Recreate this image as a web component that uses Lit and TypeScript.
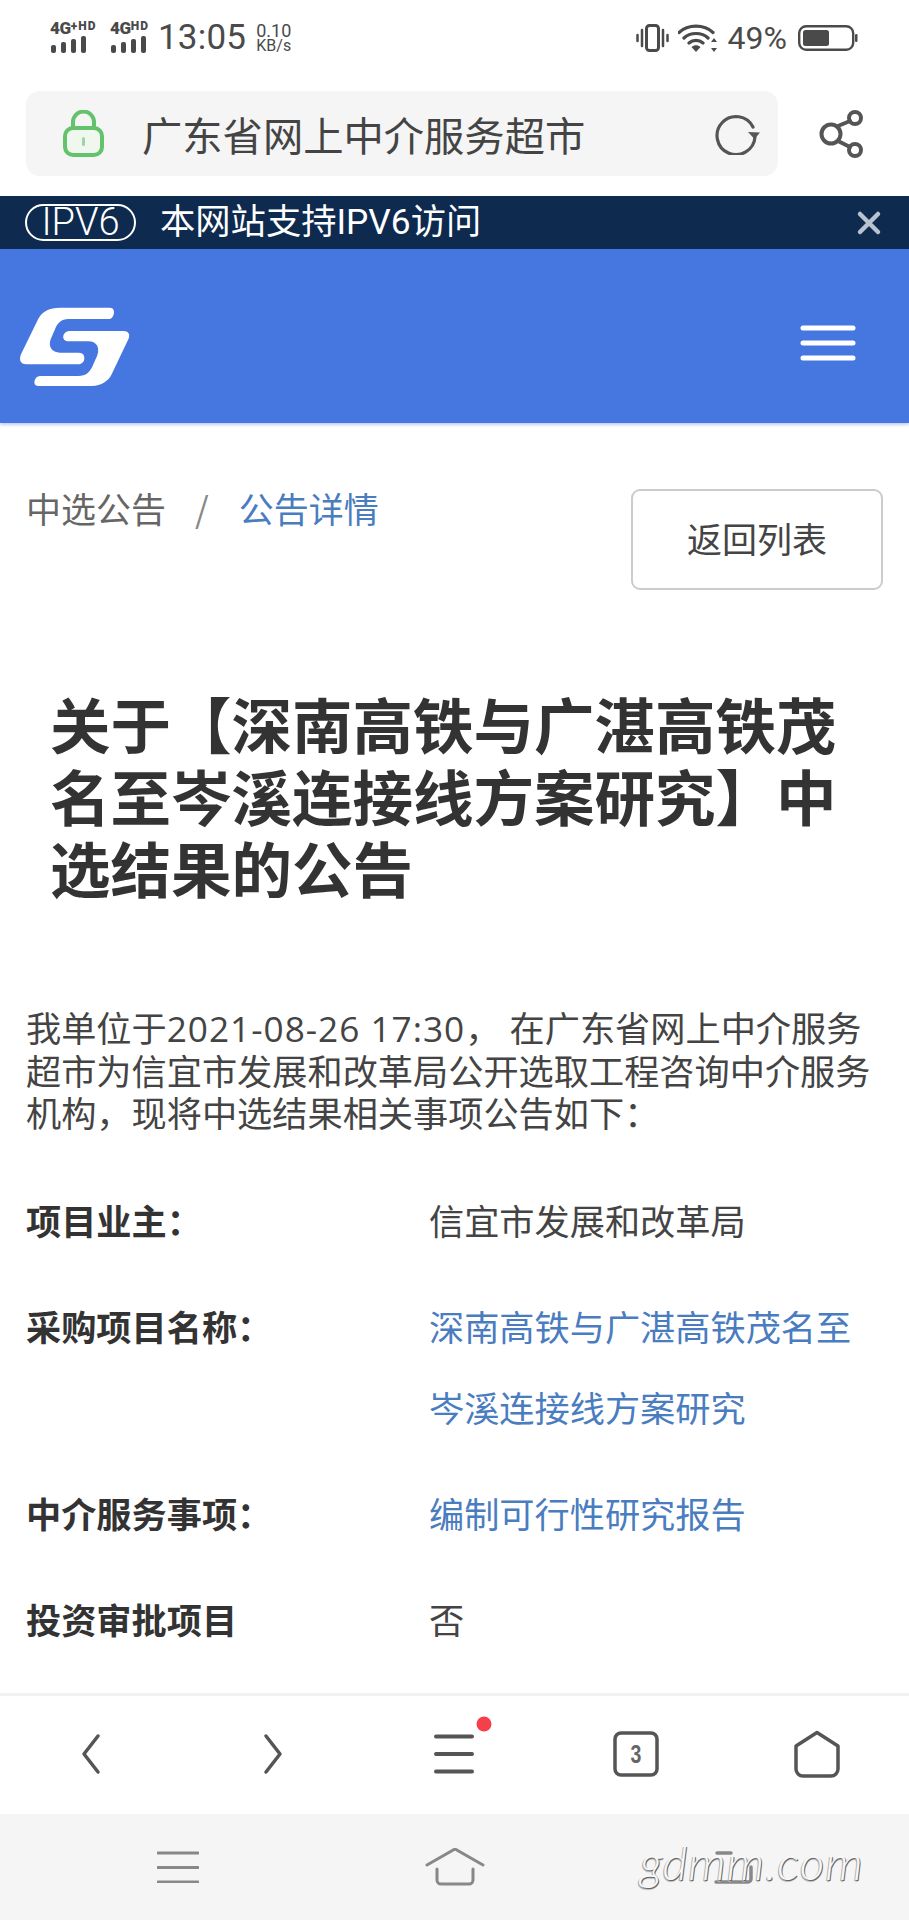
import { LitElement, html, css } from "lit";
import { customElement } from "lit/decorators.js";

const CJK = css`"Noto Sans CJK SC", sans-serif`;

@customElement("app-root")
export class AppRoot extends LitElement {
  static styles = css`
    :host { display: block; width: 909px; height: 1920px; overflow: hidden; background: #fff; font-family: Roboto, ${CJK}; color: #444; position: relative; }
    * { box-sizing: border-box; }
    .page { display: flex; flex-direction: column; height: 1920px; }
    svg { display: block; flex: none; }
    svg.over { overflow: visible; }

    .status { height: 91px; flex: none; display: flex; align-items: center; padding: 0 51px 16px 50px; color: #4a4a4a; }
    .sig { display: flex; flex-direction: column; width: 51px; margin-right: 9px; gap: 0; }
    .sig.two { width: 39px; margin-right: 9px; }
    .sig b { font: 900 17px/15px Roboto, sans-serif; white-space: nowrap; letter-spacing: -.3px; }
    .sig b sup { font-size: 12px; line-height: 0; vertical-align: 4px; letter-spacing: 1px; }
    .time { font: 400 35px/40px Roboto, sans-serif; margin: 0 10px 0 0; letter-spacing: .2px; }
    .speed { font: 400 16px/14px Roboto, sans-serif; display: flex; flex-direction: column; align-items: center; }
    .speed span:first-child { font-size: 18px; line-height: 17px; }
    .grow { flex: 1; }
    .vib { margin-right: 9px; }
    .pct { font: 400 32px/32px Roboto, sans-serif; margin: 0 11px 0 10px; }

    .urlrow { flex: none; height: 105px; display: flex; padding-left: 26px; align-items: flex-start; }
    .url { width: 752px; height: 85px; background: #f5f5f5; border-radius: 14px; display: flex; align-items: center; padding: 0 17px 0 37px; }
    .url span { font: 400 40.3px/48px ${CJK}; margin-left: 38px; flex: 1; color: #444; white-space: nowrap; }
    .share { margin: 19px 0 0 41px; }

    .banner { flex: none; height: 53px; background: #0e2a4f; color: #fff; display: flex; align-items: center; padding: 0 27px 0 25px; }
    .pill { width: 111px; height: 37px; border: 2px solid #fff; border-radius: 19px; font: 300 38px/32px Roboto, sans-serif; text-align: center; }
    .banner p { margin: 0 0 0 24px; font: 400 35.3px/45px Roboto, ${CJK}; flex: 1; white-space: nowrap; }

    .head { flex: none; height: 174px; background: #4676e0; box-shadow: 0 2px 3px rgba(70,118,224,.35); display: flex; align-items: center; justify-content: space-between; padding: 14px 53px 0 10px; }
    .logo { margin-top: 6px; }

    .main { flex: 1; min-height: 0; overflow: hidden; padding: 0 26px 0 26px; }
    .crumbs { display: flex; justify-content: space-between; align-items: flex-start; padding-top: 66px; }
    .crumb { font: 400 35px/38px ${CJK}; color: #666; display: flex; }
    .crumb i { font-style: normal; color: #888; margin: 0 30px 0 29px; }
    .crumb a, .link { color: #4a7cc0; }
    .back { width: 252px; height: 101px; border: 2px solid #ccc; border-radius: 9px; font: 400 35px/93px ${CJK}; text-align: center; color: #444; }
    h1 { margin: 97px 0 0 24px; font: 700 60.5px/72px ${CJK}; color: #333; width: 800px; }
    .intro { margin: 104px 0 0 0; font: 400 35.2px/42.5px "Open Sans", ${CJK}; color: #444; }
    .intro span { display: inline-block; letter-spacing: 1px; }
    .rows { margin-top: 44px; display: flex; flex-direction: column; gap: 25px; }
    .row { display: grid; grid-template-columns: 403px 1fr; font: 400 35.2px/81px ${CJK}; color: #444; }
    .row b { font-weight: 700; color: #333; }

    .nav { flex: none; height: 121px; border-top: 3px solid #f2f2f2; background: #fff; display: grid; grid-template-columns: repeat(5, 1fr); align-items: center; justify-items: center; padding-bottom: 2px; }
    .nav .home { margin-right: 2px; }
    .sys { flex: none; height: 106px; background: #f5f5f5; display: grid; grid-template-columns: repeat(3, 1fr); padding: 0 39px; align-items: center; justify-items: center; }
    .mark { position: absolute; left: 640px; top: 1832px; font: italic 300 48px/60px Lato, sans-serif; letter-spacing: 1px; color: #f8f8f8; text-shadow: 1px 1px 0 #666, -1px 1px 0 #aaa, 0 2px 1px #bbb; white-space: nowrap; }
    .tabn { font: 700 25px/1 "Liberation Sans", sans-serif; }
  `;

  render() {
    return html`<div class="page">
      <div class="status">
        <div class="sig"><b>4G<sup>+HD</sup></b>${this.bars()}</div>
        <div class="sig two"><b>4G<sup>HD</sup></b>${this.bars()}</div>
        <div class="time">13:05</div>
        <div class="speed"><span>0.10</span><span>KB/s</span></div>
        <div class="grow"></div>
        ${this.vibrate()}${this.wifi()}
        <div class="pct">49%</div>
        ${this.battery()}
      </div>
      <div class="urlrow">
        <div class="url">
          ${this.lock()}
          <span>广东省网上中介服务超市</span>
          ${this.refresh()}
        </div>
        <div class="share">${this.shareIcon()}</div>
      </div>
      <div class="banner">
        <div class="pill">IPV6</div>
        <p>本网站支持IPV6访问</p>
        <svg width="26" height="26" viewBox="0 0 26 26"><path d="M4 4l18 18M22 4L4 22" stroke="#b9c3d0" stroke-width="4.5" stroke-linecap="round"/></svg>
      </div>
      <div class="head">
        ${this.logo()}
        <svg width="56" height="36" viewBox="0 0 56 36"><path d="M3 3h50M3 18h50M3 33h50" stroke="#fff" stroke-width="5" stroke-linecap="round"/></svg>
      </div>
      <div class="main">
        <div class="crumbs">
          <div class="crumb"><span>中选公告</span><i>/</i><a class="link">公告详情</a></div>
          <div class="back">返回列表</div>
        </div>
        <h1>关于【深南高铁与广湛高铁茂名至岑溪连接线方案研究】中选结果的公告</h1>
        <p class="intro">我单位于<span>2021-08-26 17:30</span>， 在广东省网上中介服务超市为信宜市发展和改革局公开选取工程咨询中介服务机构，现将中选结果相关事项公告如下：</p>
        <div class="rows">
          <div class="row"><b>项目业主：</b><span>信宜市发展和改革局</span></div>
          <div class="row"><b>采购项目名称：</b><span class="link">深南高铁与广湛高铁茂名至岑溪连接线方案研究</span></div>
          <div class="row"><b>中介服务事项：</b><span class="link">编制可行性研究报告</span></div>
          <div class="row"><b>投资审批项目</b><span>否</span></div>
        </div>
      </div>
      <div class="nav">
        <svg width="24" height="42" viewBox="0 0 24 42"><path d="M19 3L5 21l14 18" fill="none" stroke="#555" stroke-width="3.5" stroke-linecap="round" stroke-linejoin="round"/></svg>
        <svg width="24" height="42" viewBox="0 0 24 42"><path d="M5 3l14 18L5 39" fill="none" stroke="#555" stroke-width="3.5" stroke-linecap="round" stroke-linejoin="round"/></svg>
        <svg class="over" width="60" height="70" viewBox="0 0 60 70"><path d="M12 17.500h36M12 35h36M12 52.500h36" stroke="#555" stroke-width="4" stroke-linecap="round"/><circle cx="60" cy="5" r="7.500" fill="#f5404a"/></svg>
        <svg width="46" height="46" viewBox="0 0 46 46"><rect x="2" y="2" width="42" height="42" rx="6" fill="none" stroke="#555" stroke-width="3.500"/><text transform="translate(23 32) scale(.78 1)" text-anchor="middle" fill="#666" class="tabn">3</text></svg>
        <svg class="home" width="48" height="48" viewBox="0 0 48 48"><path d="M24 2.500L45 16v23a7 7 0 0 1-7 7H10a7 7 0 0 1-7-7V16z" fill="none" stroke="#555" stroke-width="3.500" stroke-linejoin="round"/></svg>
      </div>
      <div class="sys">
        <svg width="42" height="32" viewBox="0 0 42 32"><path d="M1 2h40M1 16.500h40M1 31h40" stroke="#888" stroke-width="3" stroke-linecap="round"/></svg>
        <svg width="60" height="38" viewBox="0 0 60 38"><path d="M2 17L30 1l28 16M12 21v11a4 4 0 0 0 4 4h28a4 4 0 0 0 4-4V21" fill="none" stroke="#888" stroke-width="3" stroke-linecap="round" stroke-linejoin="round"/></svg>
        <svg width="42" height="34" viewBox="0 0 42 34"><path d="M6 3h14M5 32h32a3 3 0 0 0 3-3V17" fill="none" stroke="#888" stroke-width="3.500" stroke-linecap="round"/></svg>
      </div>
      <div class="mark">gdmm.com</div>
    </div>`;
  }

  bars() {
    return html`<svg width="38" height="18" viewBox="0 0 38 18"><g fill="#4a4a4a"><rect x="1" y="9" width="5" height="8" rx="2"/><rect x="11" y="6" width="5" height="11" rx="2"/><rect x="21" y="3" width="5" height="14" rx="2"/><rect x="31" y="0" width="5" height="17" rx="2"/></g></svg>`;
  }
  vibrate() {
    return html`<svg class="vib" width="33" height="28" viewBox="0 0 33 28"><rect x="10.500" y="1.500" width="12" height="25" rx="3" fill="none" stroke="#4a4a4a" stroke-width="3"/><path d="M1.500 11v6M31.500 11v6M6 6v16M27 6v16" stroke="#4a4a4a" stroke-width="2.500" stroke-linecap="round"/></svg>`;
  }
  wifi() {
    return html`<svg width="40" height="30" viewBox="0 0 40 30"><path d="M1 9.500C10 1 26 1 35 9.500M6 15c6-6 18-6 24 0M11 20c4-3.500 10-3.500 14 0" fill="none" stroke="#4a4a4a" stroke-width="3.200" stroke-linecap="round"/><path d="M13.500 24c3-2.500 6-2.500 9 0L18 29z" fill="#4a4a4a"/><path d="M36 15l3 4h-6zM36 29l3-4h-6z" fill="#4a4a4a"/></svg>`;
  }
  battery() {
    return html`<svg width="60" height="26" viewBox="0 0 60 26"><rect x="1.200" y="1.200" width="54" height="23.600" rx="7" fill="none" stroke="#4a4a4a" stroke-width="2.400"/><rect x="5" y="5" width="26" height="16" rx="2.500" fill="#4a4a4a"/><rect x="57" y="9" width="2.500" height="8" rx="1.200" fill="#4a4a4a"/></svg>`;
  }
  lock() {
    return html`<svg width="41" height="47" viewBox="0 0 41 47"><path d="M10 20V12a10.500 10.500 0 0 1 21 0v8" fill="none" stroke="#63c36d" stroke-width="4"/><rect x="2" y="18" width="37" height="27" rx="8" fill="#f0f7ee" stroke="#63c36d" stroke-width="4"/><rect x="19" y="27" width="3" height="9" rx="1.500" fill="#9ed6a3"/></svg>`;
  }
  refresh() {
    return html`<svg width="46" height="42" viewBox="0 0 46 42"><path d="M38 14A19 19 0 1 0 40 24" fill="none" stroke="#555" stroke-width="3.200" stroke-linecap="round"/><path d="M33 19l12 .5-5.500 6.500z" fill="#555"/></svg>`;
  }
  shareIcon() {
    return html`<svg width="44" height="48" viewBox="0 0 44 48"><g fill="none" stroke="#555" stroke-width="4"><circle cx="12" cy="24" r="9.500"/><circle cx="36" cy="8" r="6"/><circle cx="36" cy="40" r="6"/><path d="M19 16l12-5M19 31l12 6" stroke-linecap="round"/></g></svg>`;
  }
  logo() {
    return html`<svg class="logo" width="130" height="100" viewBox="0 0 390 300"><g fill="#fff"><path d="M300 35H150C118 35 98 45 85 68L33 175C26 192 32 205 48 205H205C218 205 226 192 222 180C220 172 214 170 206 170H150C126 170 114 152 122 130L135 100C142 80 155 69 175 69H298C312 69 320 35 300 35Z"/><path d="M340 105H178C165 105 158 118 160 126C162 134 170 136 178 136H235C260 136 270 155 262 178L250 205C240 230 228 240 205 240H90C72 240 66 270 84 270H245C275 270 295 255 305 235L355 130C362 115 355 105 340 105Z"/></g></svg>`;
  }
}
